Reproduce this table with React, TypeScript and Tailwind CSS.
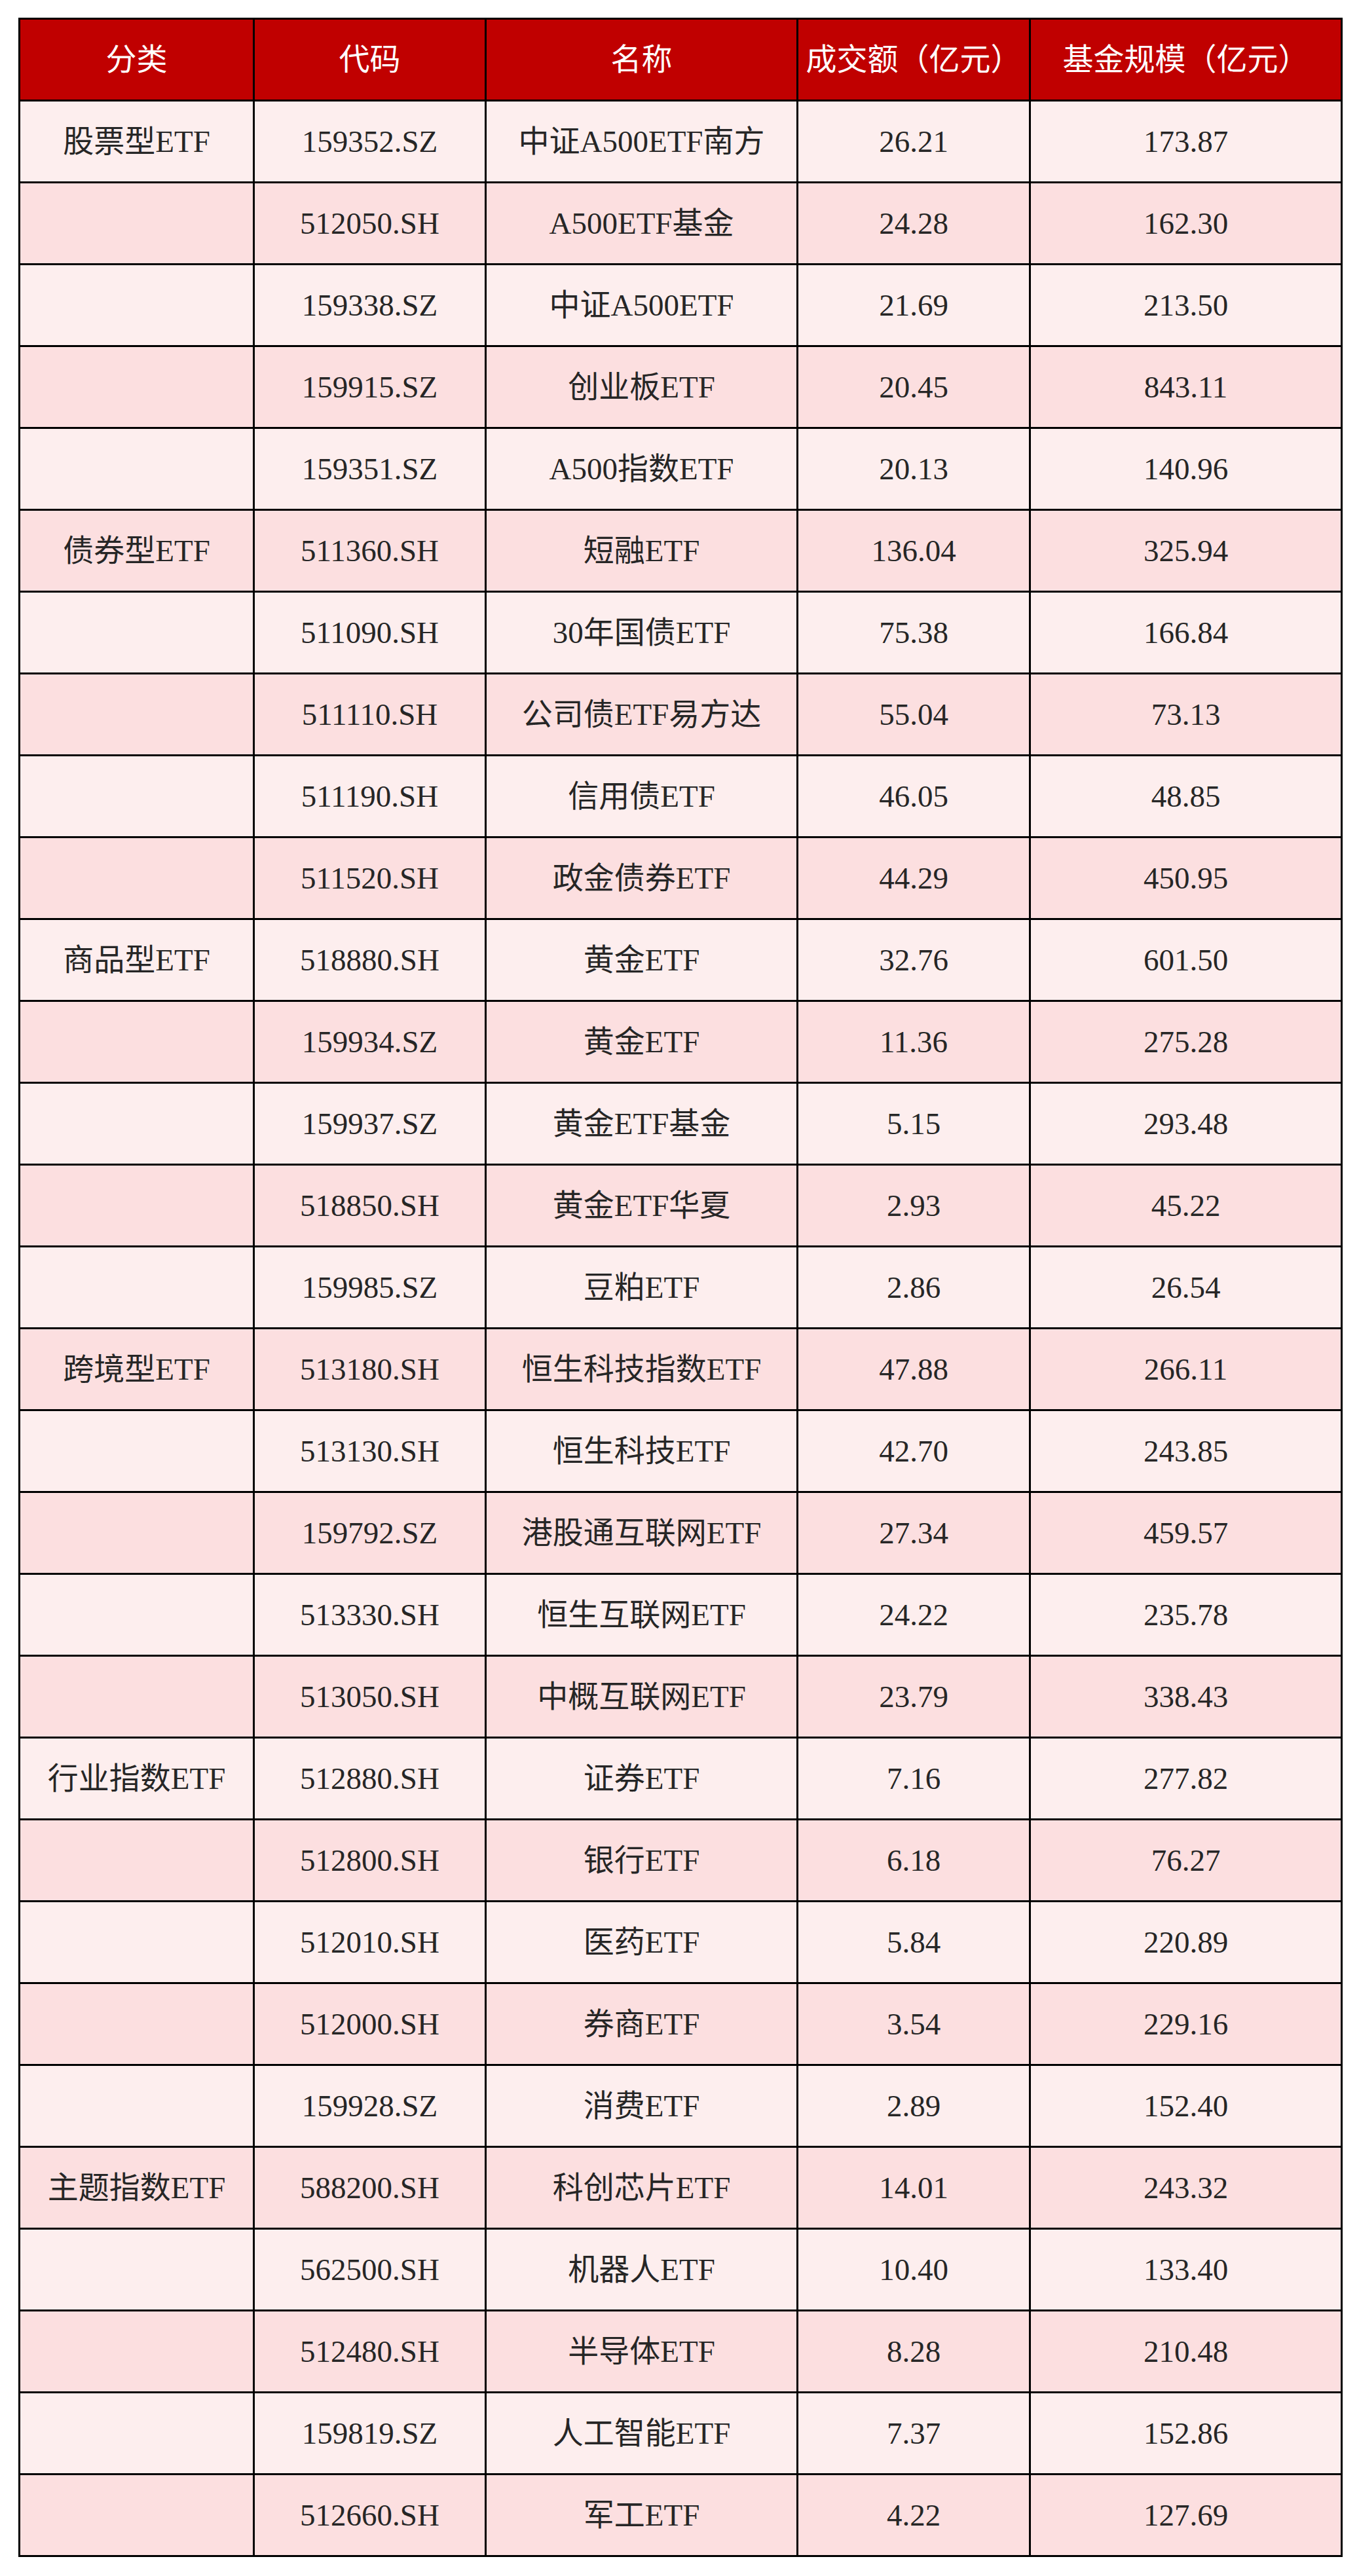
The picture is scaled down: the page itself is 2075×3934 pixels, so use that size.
const rows: [string, string, string, string, string][] = [
  ["股票型ETF", "159352.SZ", "中证A500ETF南方", "26.21", "173.87"],
  ["", "512050.SH", "A500ETF基金", "24.28", "162.30"],
  ["", "159338.SZ", "中证A500ETF", "21.69", "213.50"],
  ["", "159915.SZ", "创业板ETF", "20.45", "843.11"],
  ["", "159351.SZ", "A500指数ETF", "20.13", "140.96"],
  ["债券型ETF", "511360.SH", "短融ETF", "136.04", "325.94"],
  ["", "511090.SH", "30年国债ETF", "75.38", "166.84"],
  ["", "511110.SH", "公司债ETF易方达", "55.04", "73.13"],
  ["", "511190.SH", "信用债ETF", "46.05", "48.85"],
  ["", "511520.SH", "政金债券ETF", "44.29", "450.95"],
  ["商品型ETF", "518880.SH", "黄金ETF", "32.76", "601.50"],
  ["", "159934.SZ", "黄金ETF", "11.36", "275.28"],
  ["", "159937.SZ", "黄金ETF基金", "5.15", "293.48"],
  ["", "518850.SH", "黄金ETF华夏", "2.93", "45.22"],
  ["", "159985.SZ", "豆粕ETF", "2.86", "26.54"],
  ["跨境型ETF", "513180.SH", "恒生科技指数ETF", "47.88", "266.11"],
  ["", "513130.SH", "恒生科技ETF", "42.70", "243.85"],
  ["", "159792.SZ", "港股通互联网ETF", "27.34", "459.57"],
  ["", "513330.SH", "恒生互联网ETF", "24.22", "235.78"],
  ["", "513050.SH", "中概互联网ETF", "23.79", "338.43"],
  ["行业指数ETF", "512880.SH", "证券ETF", "7.16", "277.82"],
  ["", "512800.SH", "银行ETF", "6.18", "76.27"],
  ["", "512010.SH", "医药ETF", "5.84", "220.89"],
  ["", "512000.SH", "券商ETF", "3.54", "229.16"],
  ["", "159928.SZ", "消费ETF", "2.89", "152.40"],
  ["主题指数ETF", "588200.SH", "科创芯片ETF", "14.01", "243.32"],
  ["", "562500.SH", "机器人ETF", "10.40", "133.40"],
  ["", "512480.SH", "半导体ETF", "8.28", "210.48"],
  ["", "159819.SZ", "人工智能ETF", "7.37", "152.86"],
  ["", "512660.SH", "军工ETF", "4.22", "127.69"],
];

const headers = ["分类", "代码", "名称", "成交额（亿元）", "基金规模（亿元）"];

export default function App() {
  return (
    <div className="min-h-[3934px] bg-white pl-[28px] pt-[27px] font-['Liberation_Serif','Noto_Sans_CJK_SC',serif]">
      <table className="w-[2019px] table-fixed border-collapse border-[3px] border-black text-center text-[47px]">
        <colgroup>
          <col className="w-[358px]" />
          <col className="w-[354px]" />
          <col className="w-[476px]" />
          <col className="w-[355px]" />
          <col className="w-[476px]" />
        </colgroup>
        <thead>
          <tr className="h-[125px] bg-[#c00000] text-white">
            {headers.map((h) => (
              <th key={h} className="border-[3px] border-black p-0 font-normal">
                {h}
              </th>
            ))}
          </tr>
        </thead>
        <tbody>
          {rows.map((r, i) => (
            <tr
              key={r[1]}
              className={`h-[125px] text-[#262626] ${i % 2 === 0 ? "bg-[#fdeeee]" : "bg-[#fcdfe0]"}`}
            >
              {r.map((c, j) => (
                <td key={j} className="border-[3px] border-black p-0">
                  {c}
                </td>
              ))}
            </tr>
          ))}
        </tbody>
      </table>
    </div>
  );
}
